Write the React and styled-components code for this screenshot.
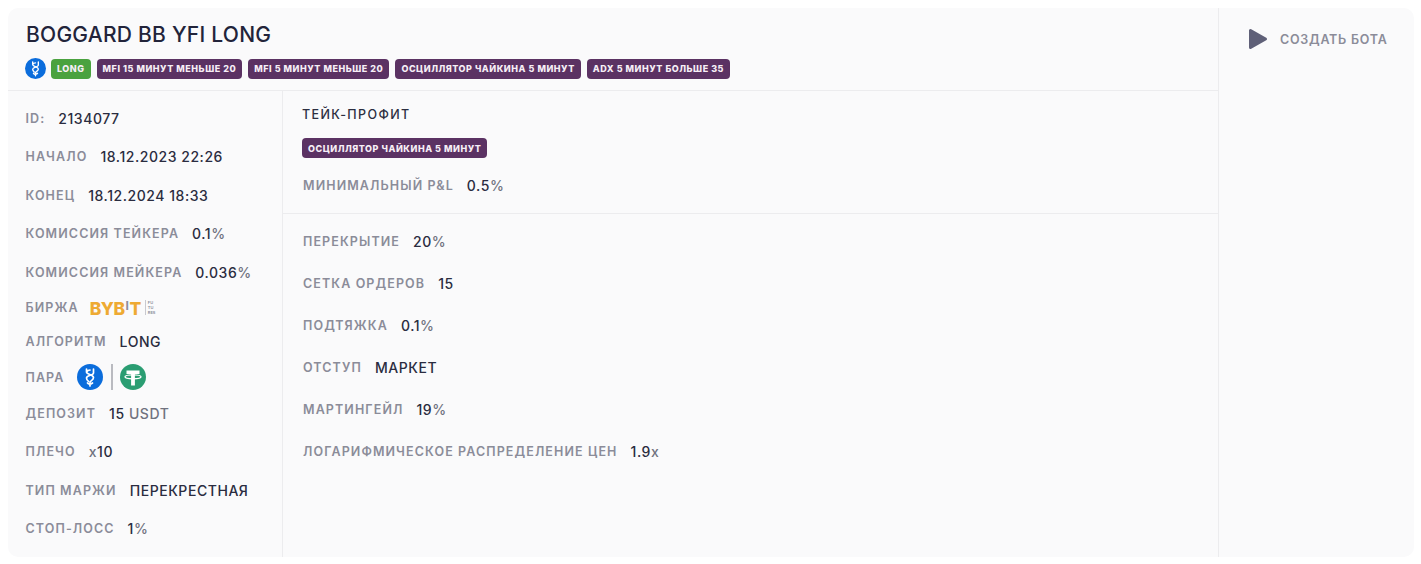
import React from "react";
import styled, { createGlobalStyle } from "styled-components";

const GlobalStyle = createGlobalStyle`
  html, body {
    margin: 0;
    background: #fff;
    font-family: "Inter", "Noto Sans", sans-serif;
  }
`;

const Page = styled.div`
  padding: 8px 7px 7px 8px;
`;

const Card = styled.div`
  display: flex;
  height: 549px;
  background: #fafafb;
  border-radius: 10px;
  overflow: hidden;
`;

const Main = styled.div`
  flex: 1;
  display: flex;
  flex-direction: column;
  min-width: 0;
`;

const Header = styled.div`
  height: 83px;
  box-sizing: border-box;
  padding: 14px 18px 0 17px;
  border-bottom: 1px solid #ececee;
`;

const Title = styled.h1`
  margin: 0 0 11px 1px;
  font-size: 21px;
  line-height: 25px;
  font-weight: 500;
  letter-spacing: 0.25px;
  color: #22243a;
`;

const Tags = styled.div`
  display: flex;
  align-items: center;
  gap: 6px;
`;

const Tag = styled.span`
  display: inline-flex;
  align-items: center;
  height: 20px;
  padding: 0 6px;
  margin-left: ${(p) => (p.$green ? "-1px" : "0")};
  border-radius: 4px;
  background: ${(p) => (p.$green ? "#4aa23f" : "#5b3263")};
  color: #f6eef6;
  font-size: 9px;
  font-weight: 800;
  letter-spacing: 0.53px;
  white-space: nowrap;
`;

const Body = styled.div`
  flex: 1;
  display: flex;
  min-height: 0;
`;

const Side = styled.div`
  width: 275px;
  box-sizing: border-box;
  padding: 8px 18px 0 17.5px;
  border-right: 1px solid #ececee;
`;

const Row = styled.div`
  display: flex;
  align-items: center;
  gap: ${(p) => p.$gap || 13}px;
  height: ${(p) => p.$h || 38.5}px;
  white-space: nowrap;
`;

const Label = styled.span`
  font-size: 12.5px;
  font-weight: 600;
  letter-spacing: 1.1px;
  color: #8b8c99;
`;

const Value = styled.span`
  font-size: 14px;
  font-weight: 500;
  letter-spacing: 0.55px;
  color: #2a2c40;
`;

const Dim = styled.span`
  color: #70727f;
`;

const Content = styled.div`
  flex: 1;
  display: flex;
  flex-direction: column;
  min-width: 0;
`;

const TakeProfit = styled.div`
  height: 123px;
  flex: none;
  box-sizing: border-box;
  padding: 16px 20px 0 19px;
  border-bottom: 1px solid #ececee;
`;

const SectionTitle = styled.div`
  margin-bottom: 15px;
  font-size: 12.5px;
  line-height: 16px;
  font-weight: 500;
  letter-spacing: 1.4px;
  color: #2c2e40;
`;

const MinRow = styled(Row)`
  margin-left: 1px;
`;

const Settings = styled.div`
  padding: 6px 20px 0;
`;

const Action = styled.div`
  width: 196px;
  box-sizing: border-box;
  flex: none;
  border-left: 1px solid #ececee;
`;

const CreateButton = styled.button`
  display: flex;
  align-items: center;
  gap: 12px;
  margin: 20px 0 0 29px;
  padding: 0;
  border: 0;
  background: none;
  font-family: inherit;
  font-size: 12.5px;
  font-weight: 600;
  letter-spacing: 0.74px;
  color: #8b8c99;
  cursor: pointer;
`;

const ExchangeLogo = styled.span`
  display: inline-flex;
  align-items: center;
  gap: 4px;
  margin-left: -2px;
`;

const BybitText = styled.span`
  font-size: 17.5px;
  line-height: 20px;
  font-weight: 800;
  letter-spacing: -0.5px;
  color: #eeaa33;
`;

const BybitI = styled.span`
  display: inline-block;
  margin: 0 1px;
  font-size: 12px;
  font-weight: 700;
  vertical-align: 5px;
  color: #8b8c99;
`;

const LogoSide = styled.span`
  display: flex;
  flex-direction: column;
  padding-left: 2px;
  border-left: 1px solid #c9c9cf;
  font-size: 4px;
  line-height: 5px;
  font-weight: 600;
  color: #8b8c99;
`;

const Pair = styled.span`
  display: inline-flex;
  align-items: center;
  gap: 7.75px;
`;

const PairDivider = styled.span`
  width: 1.5px;
  height: 26px;
  background: #b9bac0;
`;

const YfiIcon = ({ size }) => (
  <svg width={size} height={size} viewBox="0 0 26 26">
    <circle cx="13" cy="13" r="13" fill="#0b6ddc" />
    <path
      d="M16.5 5v4c0 2.4-7 2.2-7 5 0 1.6 1 2.6 2 3.4M9.5 5v3c0 2.6 7 2.6 7 5.6 0 2.8-3.5 3-3.5 4.8V22M9.5 8c1-1.5 2.2-2 3.5-2M10.5 19c1 1.4 3 1.6 5 0"
      fill="none"
      stroke="#fff"
      strokeWidth="1.7"
      strokeLinecap="round"
      strokeLinejoin="round"
    />
  </svg>
);

const TetherIcon = ({ size }) => (
  <svg width={size} height={size} viewBox="0 0 26 26">
    <circle cx="13" cy="13" r="13" fill="#2a9d72" />
    <path d="M6.5 6.5h13v3.6h-4.6V21.5h-3.8V10.1H6.5z" fill="#fff" />
    <ellipse cx="13" cy="12.8" rx="8" ry="2" fill="none" stroke="#fff" strokeWidth="1.3" />
  </svg>
);

const PlayIcon = () => (
  <svg width="20" height="22" viewBox="0 0 20 22">
    <path
      d="M2.5 2.5v17L17.5 11z"
      fill="#5f6078"
      stroke="#5f6078"
      strokeWidth="3"
      strokeLinejoin="round"
    />
  </svg>
);

const TAGS = [
  "MFI 15 МИНУТ МЕНЬШЕ 20",
  "MFI 5 МИНУТ МЕНЬШЕ 20",
  "ОСЦИЛЛЯТОР ЧАЙКИНА 5 МИНУТ",
  "ADX 5 МИНУТ БОЛЬШЕ 35",
];

const SETTINGS = [
  ["ПЕРЕКРЫТИЕ", <>20<Dim>%</Dim></>],
  ["СЕТКА ОРДЕРОВ", "15"],
  ["ПОДТЯЖКА", <>0.1<Dim>%</Dim></>],
  ["ОТСТУП", "МАРКЕТ"],
  ["МАРТИНГЕЙЛ", <>19<Dim>%</Dim></>],
  ["ЛОГАРИФМИЧЕСКОЕ РАСПРЕДЕЛЕНИЕ ЦЕН", <>1.9<Dim>x</Dim></>],
];

export default function App() {
  return (
    <>
      <GlobalStyle />
      <Page>
        <Card>
          <Main>
            <Header>
              <Title>BOGGARD BB YFI LONG</Title>
              <Tags>
                <YfiIcon size={21} />
                <Tag $green>LONG</Tag>
                {TAGS.map((tag) => (
                  <Tag key={tag}>{tag}</Tag>
                ))}
              </Tags>
            </Header>
            <Body>
              <Side>
                <Row>
                  <Label>ID:</Label>
                  <Value>2134077</Value>
                </Row>
                <Row>
                  <Label>НАЧАЛО</Label>
                  <Value>18.12.2023 22:26</Value>
                </Row>
                <Row>
                  <Label>КОНЕЦ</Label>
                  <Value>18.12.2024 18:33</Value>
                </Row>
                <Row>
                  <Label>КОМИССИЯ ТЕЙКЕРА</Label>
                  <Value>0.1<Dim>%</Dim></Value>
                </Row>
                <Row>
                  <Label>КОМИССИЯ МЕЙКЕРА</Label>
                  <Value>0.036<Dim>%</Dim></Value>
                </Row>
                <Row $h={32}>
                  <Label>БИРЖА</Label>
                  <ExchangeLogo>
                    <BybitText>BYB<BybitI>I</BybitI>T</BybitText>
                    <LogoSide>
                      <span>FU</span>
                      <span>TU</span>
                      <span>RES</span>
                    </LogoSide>
                  </ExchangeLogo>
                </Row>
                <Row $h={36}>
                  <Label>АЛГОРИТМ</Label>
                  <Value>LONG</Value>
                </Row>
                <Row $h={35}>
                  <Label>ПАРА</Label>
                  <Pair>
                    <YfiIcon size={26} />
                    <PairDivider />
                    <TetherIcon size={26} />
                  </Pair>
                </Row>
                <Row $h={37}>
                  <Label>ДЕПОЗИТ</Label>
                  <Value>15 <Dim>USDT</Dim></Value>
                </Row>
                <Row $h={39.5}>
                  <Label>ПЛЕЧО</Label>
                  <Value><Dim>x</Dim>10</Value>
                </Row>
                <Row>
                  <Label>ТИП МАРЖИ</Label>
                  <Value>ПЕРЕКРЕСТНАЯ</Value>
                </Row>
                <Row>
                  <Label>СТОП-ЛОСС</Label>
                  <Value>1<Dim>%</Dim></Value>
                </Row>
              </Side>
              <Content>
                <TakeProfit>
                  <SectionTitle>ТЕЙК-ПРОФИТ</SectionTitle>
                  <Tags>
                    <Tag>ОСЦИЛЛЯТОР ЧАЙКИНА 5 МИНУТ</Tag>
                  </Tags>
                  <MinRow $h={54}>
                    <Label>МИНИМАЛЬНЫЙ P&amp;L</Label>
                    <Value>0.5<Dim>%</Dim></Value>
                  </MinRow>
                </TakeProfit>
                <Settings>
                  {SETTINGS.map(([label, value]) => (
                    <Row key={label} $h={42}>
                      <Label>{label}</Label>
                      <Value>{value}</Value>
                    </Row>
                  ))}
                </Settings>
              </Content>
            </Body>
          </Main>
          <Action>
            <CreateButton>
              <PlayIcon />
              СОЗДАТЬ БОТА
            </CreateButton>
          </Action>
        </Card>
      </Page>
    </>
  );
}
